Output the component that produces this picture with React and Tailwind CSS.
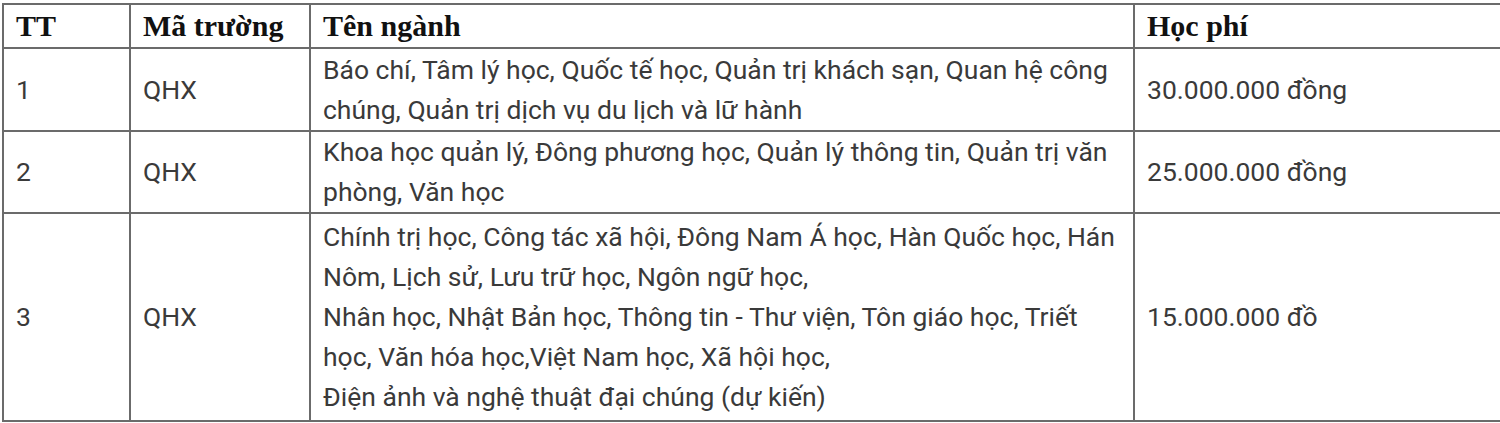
const rows = [
  {
    tt: '1',
    ma: 'QHX',
    lines: [
      'Báo chí, Tâm lý học, Quốc tế học, Quản trị khách sạn, Quan hệ công',
      'chúng, Quản trị dịch vụ du lịch và lữ hành',
    ],
    fee: '30.000.000 đồng',
    h: 'h-[83px]',
  },
  {
    tt: '2',
    ma: 'QHX',
    lines: [
      'Khoa học quản lý, Đông phương học, Quản lý thông tin, Quản trị văn',
      'phòng, Văn học',
    ],
    fee: '25.000.000 đồng',
    h: 'h-[82px]',
  },
  {
    tt: '3',
    ma: 'QHX',
    lines: [
      'Chính trị học, Công tác xã hội, Đông Nam Á học, Hàn Quốc học, Hán',
      'Nôm, Lịch sử, Lưu trữ học, Ngôn ngữ học,',
      'Nhân học, Nhật Bản học, Thông tin - Thư viện, Tôn giáo học, Triết',
      'học, Văn hóa học,Việt Nam học, Xã hội học,',
      'Điện ảnh và nghệ thuật đại chúng (dự kiến)',
    ],
    fee: '15.000.000 đồ',
    h: 'h-[208px]',
  },
];

const th = 'border-2 border-[#6b6b6b] px-[12px] text-left align-middle font-bold';
const td = 'border-2 border-[#6b6b6b] px-[12px] align-middle';

export default function App() {
  return (
    <div className="h-[423px] w-[1500px] overflow-hidden bg-white pt-[3px] pl-[2px]">
      <table className="w-[1500px] table-fixed border-collapse">
        <colgroup>
          <col className="w-[127px]" />
          <col className="w-[180px]" />
          <col className="w-[824px]" />
          <col />
        </colgroup>
        <thead>
          <tr className="h-[44px] font-['Liberation_Serif',serif] text-[30px] leading-none text-[#111]">
            <th className={th}>TT</th>
            <th className={th}>Mã trường</th>
            <th className={th}>Tên ngành</th>
            <th className={th + ' border-r-0'}>Học phí</th>
          </tr>
        </thead>
        <tbody className="font-['Roboto',sans-serif] text-[26.5px] leading-[40px] text-[#3a3a3a]">
          {rows.map((r) => (
            <tr key={r.tt} className={r.h}>
              <td className={td}>{r.tt}</td>
              <td className={td}>{r.ma}</td>
              <td className={td}>
                {r.lines.map((l) => (
                  <span key={l} className="block whitespace-nowrap">
                    {l}
                  </span>
                ))}
              </td>
              <td className={td + ' border-r-0'}>{r.fee}</td>
            </tr>
          ))}
        </tbody>
      </table>
    </div>
  );
}
